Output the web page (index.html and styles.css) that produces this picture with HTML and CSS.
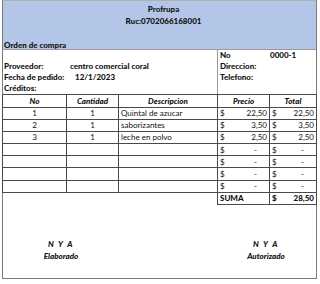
FILE: index.html
```html
<!DOCTYPE html>
<html lang="es">
<head>
    <meta charset="UTF-8">
    <title>Orden de compra</title>
    <link rel="stylesheet" href="styles.css">
</head>
<body>
    <div class="sheet">
        <div class="head">
            <div class="title">Profrupa</div>
            <div class="title">Ruc:0702066168001</div>
            <div class="order">Orden de compra</div>
        </div>

        <div class="info">
            <div class="info-left">
                <div class="line">&nbsp;</div>
                <div class="line"><span class="label">Proveedor:</span><span class="val">centro comercial coral</span></div>
                <div class="line"><span class="label wide">Fecha de pedido:</span><span class="val">12/1/2023</span></div>
                <div class="line">Créditos:</div>
            </div>
            <div class="info-right">
                <div class="line"><span class="label short">No</span><span class="val">0000-1</span></div>
                <div class="line">Direccion:</div>
                <div class="line">Telefono:</div>
                <div class="line">&nbsp;</div>
            </div>
        </div>

        <table class="grid">
            <colgroup>
                <col class="c-no">
                <col class="c-qty">
                <col class="c-desc">
                <col class="c-price">
                <col class="c-total">
            </colgroup>
            <tr class="hdr">
                <th>No</th>
                <th>Cantidad</th>
                <th>Descripcion</th>
                <th>Precio</th>
                <th>Total</th>
            </tr>
            <tr>
                <td class="ctr">1</td>
                <td class="ctr">1</td>
                <td>Quintal de azucar</td>
                <td><div class="money"><span>$</span><span>22,50</span></div></td>
                <td><div class="money"><span>$</span><span>22,50</span></div></td>
            </tr>
            <tr>
                <td class="ctr">2</td>
                <td class="ctr">1</td>
                <td>saborizantes</td>
                <td><div class="money"><span>$</span><span>3,50</span></div></td>
                <td><div class="money"><span>$</span><span>3,50</span></div></td>
            </tr>
            <tr>
                <td class="ctr">3</td>
                <td class="ctr">1</td>
                <td>leche en polvo</td>
                <td><div class="money"><span>$</span><span>2,50</span></div></td>
                <td><div class="money"><span>$</span><span>2,50</span></div></td>
            </tr>
            <tr>
                <td></td><td></td><td></td>
                <td><div class="money"><span>$</span><span class="dash">-</span></div></td>
                <td><div class="money"><span>$</span><span class="dash">-</span></div></td>
            </tr>
            <tr>
                <td></td><td></td><td></td>
                <td><div class="money"><span>$</span><span class="dash">-</span></div></td>
                <td><div class="money"><span>$</span><span class="dash">-</span></div></td>
            </tr>
            <tr>
                <td></td><td></td><td></td>
                <td><div class="money"><span>$</span><span class="dash">-</span></div></td>
                <td><div class="money"><span>$</span><span class="dash">-</span></div></td>
            </tr>
            <tr>
                <td></td><td></td><td></td>
                <td><div class="money"><span>$</span><span class="dash">-</span></div></td>
                <td><div class="money"><span>$</span><span class="dash">-</span></div></td>
            </tr>
            <tr class="sum">
                <td class="blank"></td><td class="blank"></td><td class="blank"></td>
                <td>SUMA</td>
                <td><div class="money"><span>$</span><span>28,50</span></div></td>
            </tr>
        </table>

        <div class="signs">
            <div class="sign">
                <div class="nya">N Y A</div>
                <div>Elaborado</div>
            </div>
            <div class="sign">
                <div class="nya">N Y A</div>
                <div>Autorizado</div>
            </div>
        </div>
    </div>
</body>
</html>
```

FILE: styles.css
```css
body {
    margin: 0;
    background-color: #fff;
    font-family: Lato, "Liberation Sans", sans-serif;
    font-size: 8px;
    color: #111;
}

.sheet {
    box-sizing: border-box;
    width: 315px;
    height: 279px;
    margin-left: 2px;
    border: 1px solid #7a7a7a;
    border-top-color: #b0b0b0;
}

.head {
    height: 48px;
    background-color: #b4c6e7;
    border-bottom: 1px solid #9a9a9a;
    font-weight: 900;
}

.title {
    text-align: center;
    line-height: 12px;
    padding-left: 8px;
}

.title:first-child {
    padding-top: 2px;
}

.order {
    padding: 13px 0 0 1px;
    line-height: 10px;
}

.info {
    display: flex;
    font-weight: 900;
    height: 44px;
}

.info-left {
    width: 213px;
    padding-left: 1px;
}

.info-right {
    flex: 1;
    border-left: 1px solid #9a9a9a;
    padding-left: 2px;
}

.line {
    height: 11px;
    line-height: 11px;
    white-space: nowrap;
}

.label {
    display: inline-block;
    width: 66px;
}

.label.wide {
    width: 71px;
}

.label.short {
    width: 50px;
}

.grid {
    border-collapse: collapse;
    table-layout: fixed;
    width: 314px;
    margin-left: -1px;
}

.c-no { width: 64px; }
.c-qty { width: 52px; }
.c-desc { width: 99px; }
.c-price { width: 52px; }
.c-total { width: 47px; }

.grid th,
.grid td {
    border: 1px solid #4a4a4a;
    height: 11.2px;
    padding: 0 2px;
    line-height: 10px;
    white-space: nowrap;
    font-weight: normal;
    text-align: left;
}

.grid th {
    height: 11.5px;
    font-weight: 900;
    font-style: italic;
    text-align: center;
}

.grid td.ctr {
    text-align: center;
}

.grid td.blank {
    border-left: none;
    border-right: none;
    border-bottom: none;
}

.sum td {
    font-weight: 900;
}

.money {
    display: flex;
    justify-content: space-between;
}

.dash {
    padding-right: 10px;
}

.signs {
    display: flex;
    justify-content: space-between;
    padding: 33px 0 0 0;
    font-weight: 900;
    font-style: italic;
}

.sign {
    width: 116px;
    text-align: center;
    line-height: 12px;
}

.sign:last-child {
    width: 100px;
}

.nya {
    letter-spacing: 1.5px;
}
```
